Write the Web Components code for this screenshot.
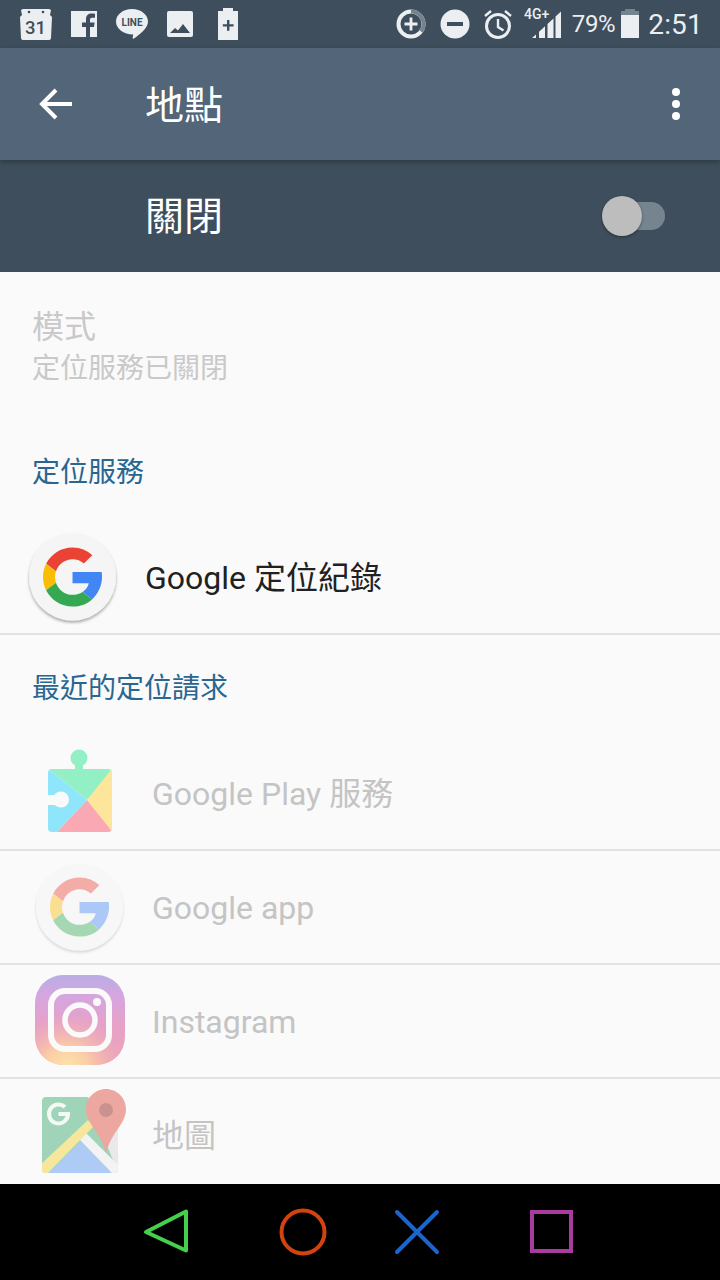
<!DOCTYPE html>
<html lang="zh-Hant">
<head>
<meta charset="utf-8">
<title>地點</title>
<style>
    html, body { margin: 0; padding: 0; background: #000; }
    body {
        width: 720px;
        height: 1280px;
        overflow: hidden;
        display: flex;
        flex-direction: column;
        font-family: Roboto, "Noto Sans CJK TC", sans-serif;
    }
</style>
</head>
<body>
    <status-bar></status-bar>
    <app-bar title="地點"></app-bar>
    <switch-bar label="關閉"></switch-bar>
    <settings-list>
        <mode-summary title="模式" summary="定位服務已關閉"></mode-summary>
        <section-title style="--title-top:64px;--title-bottom:31px">定位服務</section-title>
        <app-row icon="google" text-start="145" icon-start="28">Google 定位紀錄</app-row>
        <section-title style="--title-top:31px;--title-bottom:31px">最近的定位請求</section-title>
        <app-row icon="play" disabled icon-start="45">Google Play 服務</app-row>
        <app-row icon="google" disabled icon-start="35">Google app</app-row>
        <app-row icon="instagram" disabled icon-start="35">Instagram</app-row>
        <app-row icon="maps" disabled no-divider icon-start="40">地圖</app-row>
    </settings-list>
    <nav-bar></nav-bar>

<script>
const GOOGLE_G = `
    <path fill="#ea4335" d="M24 9.5c3.54 0 6.71 1.22 9.21 3.6l6.85-6.85C35.9 2.38 30.47 0 24 0 14.62 0 6.51 5.38 2.56 13.22l7.98 6.19C12.43 13.72 17.74 9.5 24 9.5z"/>
    <path fill="#4285f4" d="M48 24c0-1.4-.1-2.7-.3-4H24v9h13.2c-.6 3-2.6 5.400-5 7.200l7.700 6C44.400 38 48 31.300 48 24z"/>
    <path fill="#fbbc05" d="M10.530 28.590c-.48-1.450-.76-2.990-.76-4.590s.27-3.140.76-4.590l-7.980-6.190C.92 16.460 0 20.120 0 24c0 3.880.92 7.540 2.560 10.780l7.970-6.190z"/>
    <path fill="#34a853" d="M24 48c6.480 0 11.930-2.130 15.890-5.810l-7.730-6c-2.150 1.450-4.920 2.300-8.160 2.300-6.260 0-11.570-4.220-13.470-9.910l-7.980 6.190C6.510 42.620 14.620 48 24 48z"/>`;

const APP_ICONS = {
    google: `
        <svg width="90" height="92" viewBox="0 0 90 92">
            <defs><filter id="s" x="-20%" y="-20%" width="140%" height="140%">
                <feDropShadow dx="0" dy="2" stdDeviation="1.500" flood-color="#000" flood-opacity=".35"/>
            </filter></defs>
            <circle cx="44.500" cy="46" r="43.500" fill="#f5f5f5" filter="url(#s)"/>
            <g transform="translate(15 16.500) scale(1.230)">${GOOGLE_G}</g>
        </svg>`,
    play: `
        <svg width="72" height="92" viewBox="0 2 72 92">
            <defs><clipPath id="body">
                <rect x="3" y="24" width="64" height="63" rx="4"/>
            </clipPath></defs>
            <circle cx="34" cy="13" r="8.500" fill="#93f0c5"/>
            <rect x="30" y="16" width="8" height="10" fill="#93f0c5"/>
            <g clip-path="url(#body)">
                <path fill="#93f0c5" d="M0 21h72L42 55z"/>
                <path fill="#fde69a" d="M70 20v70L42 55z"/>
                <path fill="#f9a8b4" d="M12 87l30-32 28 35H8z"/>
                <path fill="#8fe6fb" d="M0 21l42 34-30 32H0z"/>
                <circle cx="16" cy="54.500" r="8" fill="#fafafa"/>
                <rect x="0" y="50" width="16" height="10" fill="#fafafa"/>
            </g>
        </svg>`,
    instagram: `
        <svg width="90" height="90" viewBox="0 1 90 90">
            <defs>
                <linearGradient id="ig" x1="0" y1="0" x2="0" y2="1">
                    <stop offset="0" stop-color="#b9aee4"/>
                    <stop offset=".22" stop-color="#d4a6e0"/>
                    <stop offset=".55" stop-color="#e6a1c8"/>
                    <stop offset="1" stop-color="#eda6b6"/>
                </linearGradient>
                <radialGradient id="ig2" cx=".35" cy="1.050" r=".62">
                    <stop offset="0" stop-color="#fee6ac"/>
                    <stop offset=".4" stop-color="#fcd0a4" stop-opacity=".95"/>
                    <stop offset="1" stop-color="#f3b0b0" stop-opacity="0"/>
                </radialGradient>
            </defs>
            <rect width="90" height="90" rx="28" fill="url(#ig)"/>
            <rect width="90" height="90" rx="28" fill="url(#ig2)"/>
            <rect x="16" y="16" width="58" height="58" rx="14" fill="none" stroke="#fafafa" stroke-width="6"/>
            <circle cx="45" cy="45" r="15" fill="none" stroke="#fafafa" stroke-width="5.500"/>
            <circle cx="62" cy="27" r="4" fill="#fafafa"/>
        </svg>`,
    maps: `
        <svg width="90" height="92" viewBox="0 0 90 92">
            <defs><clipPath id="sheet"><rect x="2" y="10" width="76" height="76" rx="4"/></clipPath></defs>
            <g transform="translate(0 -2)">
                <g clip-path="url(#sheet)">
                    <rect x="2" y="10" width="76" height="76" fill="#a0d4b8"/>
                    <path fill="#e9e9e9" d="M48 10h30v76z"/>
                    <path fill="#aecbf5" d="M41 54L8 86h66z"/>
                    <path fill="#f3f3f3" d="M46 46l32 32v8h-6L40 53z"/>
                    <path fill="#f6e79c" d="M-2 80l50-47 6 6L4 90z"/>
                </g>
                <path d="M25 20a9.500 9.500 0 1 0 3 7h-9.500" fill="none" stroke="#f4f9f6" stroke-width="4"/>
                <path fill="#eca8a0" d="M66 2c11 0 20 9 20 20 0 15-14 22-20 44-6-22-20-29-20-44C46 11 55 2 66 2z"/>
                <circle cx="66" cy="23" r="7" fill="#c9928f"/>
            </g>
        </svg>`,
};

class StatusBar extends HTMLElement {
    constructor() {
        super();
        this.attachShadow({ mode: 'open' });
    }

    connectedCallback() {
        this.shadowRoot.innerHTML = `
            <style>
                :host {
                    display: flex;
                    justify-content: space-between;
                    align-items: center;
                    flex: none;
                    height: 48px;
                    padding: 0 17px 0 20px;
                    box-sizing: border-box;
                    background: #3e4e5c;
                    color: #eceff1;
                    font-family: Roboto, sans-serif;
                }
                .group { display: flex; align-items: center; }
                svg { display: block; flex: none; }
                .pct { font-size: 24px; margin-left: 10px; letter-spacing: -.4px; }
                .time { font-size: 28px; margin-left: 9px; letter-spacing: .2px; }
                svg text { font-family: Roboto, sans-serif; }
            </style>
            <div class="group">
                <svg width="32" height="34" viewBox="0 0 32 34">
                    <path fill="#eceff1" d="M1 3l2-1h26l2 1-1 5 2 2-1 21a2 2 0 0 1-2 2H3a2 2 0 0 1-2-2L0 10l2-2z"/>
                    <circle cx="9" cy="5" r="1.300" fill="#3e4e5c"/><circle cx="23" cy="5" r="1.300" fill="#3e4e5c"/>
                    <text x="15.500" y="27" text-anchor="middle" font-size="18.500" font-weight="500" fill="#3e4e5c">31</text>
                </svg>
                <svg width="26" height="28" viewBox="0 0 26 28" style="margin-left:19px">
                    <path fill="#eceff1" d="M0 1h26v26h-7V17h4l.6-4.500H19V10c0-1.400.5-2.200 2.200-2.200H24V3.800c-.6-.1-1.900-.2-3.400-.2-3.300 0-5.600 2-5.600 5.800v3.100h-4V17h4v10H0z"/>
                </svg>
                <svg width="32" height="32" viewBox="0 0 32 32" style="margin-left:19px">
                    <path fill="#eceff1" d="M16 1c8.800 0 16 5.500 16 12.500 0 6.500-7.500 12.500-14 17-1 .7-1.500.3-1.300-.7l.5-3.300C7.500 26.500 0 20.800 0 13.500 0 6.500 7.200 1 16 1z"/>
                    <text x="16" y="18" text-anchor="middle" font-size="10" font-weight="700" fill="#3e4e5c">LINE</text>
                </svg>
                <svg width="26" height="26" viewBox="0 0 26 26" style="margin-left:19px">
                    <rect width="26" height="26" rx="2" fill="#eceff1"/>
                    <path fill="#3e4e5c" d="M3 22l5-5 3 2.500 5-6.500 7 9z"/>
                </svg>
                <svg width="20" height="32" viewBox="0 0 20 32" style="margin-left:25px">
                    <path fill="#eceff1" d="M5 0h10v3h5v29H0V3h5z"/>
                    <path fill="#3e4e5c" d="M9 12h2.400v4.200h4.200v2.400h-4.200v4.200H9v-4.200H4.800v-2.400H9z"/>
                </svg>
            </div>
            <div class="group">
                <svg width="30" height="30" viewBox="0 0 30 30">
                    <circle cx="15" cy="15" r="12.500" fill="none" stroke="#eceff1" stroke-width="4"/>
                    <path d="M15 2.500A12.500 12.500 0 0 1 25 22.500" fill="none" stroke="#75838f" stroke-width="4"/>
                    <path fill="#eceff1" d="M13.600 8.500h2.800v5.100h5.100v2.800h-5.100v5.100h-2.800v-5.100H8.500v-2.800h5.100z"/>
                </svg>
                <svg width="30" height="30" viewBox="0 0 30 30" style="margin-left:14px">
                    <circle cx="15" cy="15" r="14.500" fill="#eceff1"/>
                    <rect x="7" y="13" width="16" height="4" fill="#3e4e5c"/>
                </svg>
                <svg width="30" height="30" viewBox="0 0 30 30" style="margin-left:13px">
                    <circle cx="15" cy="17" r="11.500" fill="none" stroke="#eceff1" stroke-width="3"/>
                    <path d="M15 10v8l5.500 3.500M2 7l6-5M28 7l-6-5" fill="none" stroke="#eceff1" stroke-width="2.400"/>
                </svg>
                <svg width="38" height="40" viewBox="0 -4 38 40" style="margin-left:11px">
                    <text x="0" y="11" font-size="14" font-weight="500" fill="#eceff1">4G+</text>
                    <path fill="#eceff1" d="M8 30l4-3.600V30zM15 23.800l6-5.500V30h-6zM23.500 16l6-5.500V30h-6zM31.500 8.600L37 3.500V30h-5.500z"/>
                </svg>
                <span class="pct">79%</span>
                <svg width="18" height="30" viewBox="0 0 18 30" style="margin-left:6px">
                    <path fill="#75838f" d="M4 0h10v2h4v5H0V2h4z"/>
                    <rect y="6" width="18" height="23" fill="#eceff1"/>
                </svg>
                <span class="time">2:51</span>
            </div>
        `;
    }
}

class AppBar extends HTMLElement {
    constructor() {
        super();
        this.attachShadow({ mode: 'open' });
    }

    connectedCallback() {
        const title = this.getAttribute('title') || '';
        this.removeAttribute('title');
        this.shadowRoot.innerHTML = `
            <style>
                :host {
                    display: flex;
                    align-items: center;
                    flex: none;
                    position: relative;
                    z-index: 1;
                    height: 112px;
                    background: #526579;
                    box-shadow: 0 2px 5px rgba(0, 0, 0, .28);
                    color: #fff;
                }
                svg { display: block; flex: none; }
                .back { margin-left: 38px; }
                h1 {
                    flex: 1;
                    margin: 0 0 0 71px;
                    padding-bottom: 4px;
                    font: 400 39px/1 "Noto Sans CJK TC", sans-serif;
                }
                .more { margin-right: 36px; }
            </style>
            <svg class="back" width="36" height="36" viewBox="0 0 36 36">
                <path d="M34 18H5M18 4L4 18l14 14" fill="none" stroke="#fff" stroke-width="4"/>
            </svg>
            <h1>${title}</h1>
            <svg class="more" width="16" height="36" viewBox="0 0 16 36">
                <circle cx="8" cy="6" r="4" fill="#fff"/>
                <circle cx="8" cy="18" r="4" fill="#fff"/>
                <circle cx="8" cy="30" r="4" fill="#fff"/>
            </svg>
        `;
    }
}

class SwitchBar extends HTMLElement {
    constructor() {
        super();
        this.attachShadow({ mode: 'open' });
    }

    connectedCallback() {
        const label = this.getAttribute('label') || '';
        this.shadowRoot.innerHTML = `
            <style>
                :host {
                    display: flex;
                    align-items: center;
                    justify-content: space-between;
                    flex: none;
                    height: 112px;
                    padding: 0 55px 0 145px;
                    box-sizing: border-box;
                    background: #3e4e5c;
                    color: #fff;
                    font: 400 39px/1 "Noto Sans CJK TC", sans-serif;
                }
                span { padding-bottom: 5px; }
                .track {
                    position: relative;
                    width: 58px;
                    height: 28px;
                    border-radius: 14px;
                    background: #76848f;
                }
                .thumb {
                    position: absolute;
                    left: -5px;
                    top: -6px;
                    width: 40px;
                    height: 40px;
                    border-radius: 50%;
                    background: #bdbdbd;
                    box-shadow: 0 1px 3px rgba(0, 0, 0, .4);
                }
            </style>
            <span>${label}</span>
            <div class="track"><div class="thumb"></div></div>
        `;
    }
}

class SettingsList extends HTMLElement {
    constructor() {
        super();
        this.attachShadow({ mode: 'open' });
        this.shadowRoot.innerHTML = `
            <style>
                :host {
                    display: flex;
                    flex-direction: column;
                    flex: 1;
                    min-height: 0;
                    overflow: hidden;
                    background: #fafafa;
                }
            </style>
            <slot></slot>
        `;
    }
}

class ModeSummary extends HTMLElement {
    constructor() {
        super();
        this.attachShadow({ mode: 'open' });
    }

    connectedCallback() {
        const title = this.getAttribute('title') || '';
        const summary = this.getAttribute('summary') || '';
        this.removeAttribute('title');
        this.shadowRoot.innerHTML = `
            <style>
                :host {
                    display: flex;
                    flex-direction: column;
                    flex: none;
                    padding: 32px 32px 0;
                    color: #c9c9c9;
                    font-family: "Noto Sans CJK TC", sans-serif;
                }
                .title { font-size: 32px; line-height: 40px; }
                .summary { font-size: 28px; line-height: 40px; margin-top: 2px; }
            </style>
            <div class="title">${title}</div>
            <div class="summary">${summary}</div>
        `;
    }
}

class SectionTitle extends HTMLElement {
    constructor() {
        super();
        this.attachShadow({ mode: 'open' });
        this.shadowRoot.innerHTML = `
            <style>
                :host {
                    display: block;
                    flex: none;
                    padding: var(--title-top) 32px var(--title-bottom);
                    color: #2a6690;
                    font: 400 28px/40px "Noto Sans CJK TC", sans-serif;
                }
            </style>
            <slot></slot>
        `;
    }
}

class AppRow extends HTMLElement {
    constructor() {
        super();
        this.attachShadow({ mode: 'open' });
    }

    connectedCallback() {
        const icon = APP_ICONS[this.getAttribute('icon')] || '';
        const textStart = this.getAttribute('text-start') || 152;
        const iconStart = this.getAttribute('icon-start') || 44;
        this.shadowRoot.innerHTML = `
            <style>
                :host {
                    display: grid;
                    grid-template-columns: ${textStart}px 1fr;
                    align-items: center;
                    flex: none;
                    height: 112px;
                    border-bottom: 2px solid #e2e2e2;
                    color: #212121;
                    font: 400 32px/40px Roboto, "Noto Sans CJK TC", sans-serif;
                }
                :host([no-divider]) { border-bottom: 0; }
                :host([disabled]) { color: #c4c4c4; }
                .icon { display: flex; padding-left: ${iconStart}px; }
                .label { padding-top: 2px; }
                :host([disabled]) .icon.fade { opacity: .42; }
                svg { display: block; overflow: visible; }
            </style>
            <div class="icon ${this.getAttribute('icon') === 'google' ? 'fade' : ''}">${icon}</div>
            <div class="label"><slot></slot></div>
        `;
    }
}

class NavBar extends HTMLElement {
    constructor() {
        super();
        this.attachShadow({ mode: 'open' });
        this.shadowRoot.innerHTML = `
            <style>
                :host {
                    display: flex;
                    align-items: center;
                    flex: none;
                    height: 96px;
                    padding-left: 142px;
                    box-sizing: border-box;
                    background: #000;
                }
                svg { display: block; flex: none; }
            </style>
            <svg width="48" height="48" viewBox="0 0 48 48">
                <path d="M44 3.500v39L4 24z" fill="none" stroke="#45d04b" stroke-width="4" stroke-linejoin="round"/>
            </svg>
            <svg width="48" height="48" viewBox="0 0 48 48" style="margin-left:89px">
                <circle cx="24" cy="24" r="21.500" fill="none" stroke="#d2430f" stroke-width="4"/>
            </svg>
            <svg width="48" height="48" viewBox="0 0 48 48" style="margin-left:66px">
                <path d="M4 4l40 40M44 4L4 44" fill="none" stroke="#1a66cf" stroke-width="4" stroke-linecap="round"/>
            </svg>
            <svg width="48" height="48" viewBox="0 0 48 48" style="margin-left:87px">
                <rect x="4" y="4" width="39" height="39" fill="none" stroke="#a83ba0" stroke-width="4"/>
            </svg>
        `;
    }
}

customElements.define('status-bar', StatusBar);
customElements.define('app-bar', AppBar);
customElements.define('switch-bar', SwitchBar);
customElements.define('settings-list', SettingsList);
customElements.define('mode-summary', ModeSummary);
customElements.define('section-title', SectionTitle);
customElements.define('app-row', AppRow);
customElements.define('nav-bar', NavBar);
</script>
</body>
</html>
